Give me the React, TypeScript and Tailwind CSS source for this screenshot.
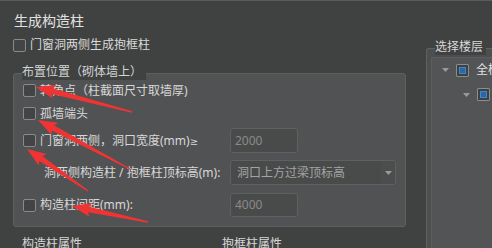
import React from "react";

const FONT = "font-['Noto_Sans','Noto_Sans_CJK_SC',sans-serif]";

const Check = () => (
  <div className="w-[13px] h-[13px] shrink-0 rounded-[2px] border border-[#8a8a8a] bg-[#434445]" />
);

const BlueCheck = () => (
  <div className="w-[13px] h-[13px] shrink-0 rounded-[1px] border border-[#8c8c8c] bg-[#3f4041] p-[2px]">
    <div className="w-full h-full bg-[#2b67a3] border border-[#3f87c8]" />
  </div>
);

const Caret = () => (
  <svg width="7" height="4" viewBox="0 0 7 4" className="shrink-0">
    <path d="M0 0 L7 0 L3.5 4 Z" fill="#9a9a9a" />
  </svg>
);

const Field = ({ value, w }: { value: string; w: string }) => (
  <div
    className={`${w} h-full flex items-center pl-[4px] rounded-[3px] border border-[#5f6060] bg-[#494a4a] text-[#8a8a8a] text-[12px]`}
  >
    {value}
  </div>
);

// tip / tail pairs of the red annotation arrows
const arrows: [number, number, number, number][] = [
  [36, 86, 132, 111],
  [38, 119, 130, 168],
  [27, 148, 88, 190],
  [72, 205, 148, 221],
];

const arrowPoints = (tx: number, ty: number, sx: number, sy: number) => {
  const dx = tx - sx;
  const dy = ty - sy;
  const len = Math.hypot(dx, dy);
  const ux = dx / len;
  const uy = dy / len;
  const nx = -uy;
  const ny = ux;
  const head = 17;
  const bx = tx - ux * head;
  const by = ty - uy * head;
  const p = (x: number, y: number) => `${x.toFixed(1)},${y.toFixed(1)}`;
  return [
    p(sx + nx * 0.7, sy + ny * 0.7),
    p(bx + nx * 2.8, by + ny * 2.8),
    p(bx - ux * 2 + nx * 7, by - uy * 2 + ny * 7),
    p(tx, ty),
    p(bx - ux * 2 - nx * 7, by - uy * 2 - ny * 7),
    p(bx - nx * 2.8, by - ny * 2.8),
    p(sx - nx * 0.7, sy - ny * 0.7),
  ].join(" ");
};

export default function App() {
  return (
    <div
      className={`relative w-[492px] h-[248px] overflow-hidden flex bg-[#404241] border-t border-[#5a5b5b] ${FONT}`}
    >
      {/* left column */}
      <div className="w-[426px] shrink-0 pl-[13px] pt-[9px] flex flex-col">
        <div className="h-[20px] pl-[1px] flex items-center text-[14px] text-[#e2e2e2]">
          生成构造柱
        </div>
        <div className="mt-[6px] h-[20px] flex items-center gap-[4px] text-[12px] text-[#dadada]">
          <Check />
          <span>门窗洞两侧生成抱框柱</span>
        </div>

        <div className="relative mt-[19px] w-[393px] h-[154px] shrink-0 rounded-[3px] border border-[#5e5f5f] bg-[#515253] pl-[9px] pt-[5px] text-[12px] text-[#d8d8d8]">
          <div className="absolute left-[8px] top-[-10px] h-[16px] pr-[4px] leading-[16px] bg-[#404241] text-[12px] text-[#d4d4d4]">
            布置位置（砌体墙上）
          </div>

          <div className="h-[23px] flex items-center gap-[4px]">
            <Check />
            <span>转角点（柱截面尺寸取墙厚)</span>
          </div>
          <div className="h-[23px] flex items-center gap-[4px]">
            <Check />
            <span>孤墙端头</span>
          </div>
          <div className="mt-[3px] h-[25px] flex items-center">
            <div className="w-[207px] flex items-center gap-[4px]">
              <Check />
              <span>
                门窗洞两侧，洞口宽度(mm)
                <span className="font-['DejaVu_Sans',sans-serif] text-[10px]">≥</span>
              </span>
            </div>
            <Field value="2000" w="w-[68px]" />
          </div>
          <div className="mt-[7px] h-[25px] flex items-center">
            <div className="w-[207px] pl-[21px]">洞两侧构造柱 / 抱框柱顶标高(m):</div>
            <div className="w-[166px] h-full flex items-center rounded-[3px] border border-[#5f6060] bg-[#494a4a] text-[12px] text-[#a4a4a4]">
              <span className="flex-1 pl-[6px]">洞口上方过梁顶标高</span>
              <div className="w-[14px] h-full flex items-center justify-center bg-[#4c4d4d]">
                <Caret />
              </div>
            </div>
          </div>
          <div className="mt-[8px] h-[24px] flex items-center">
            <div className="w-[207px] flex items-center gap-[4px]">
              <Check />
              <span>构造柱间距(mm):</span>
            </div>
            <Field value="4000" w="w-[68px]" />
          </div>
        </div>

        <div className="mt-[9px] pl-[9px] flex text-[12px] leading-[16px] text-[#d8d8d8]">
          <span className="w-[200px]">构造柱属性</span>
          <span>抱框柱属性</span>
        </div>
      </div>

      {/* right column */}
      <div className="flex-1 pt-[47px]">
        <div className="relative h-[220px] border-l border-t border-[#606161] rounded-tl-[3px] bg-[#4d4e4f] pl-[4px] pt-[8px]">
          <div className="absolute left-[8px] top-[-10px] h-[16px] pr-[3px] leading-[16px] bg-[#404241] text-[12px] text-[#d8d8d8]">
            选择楼层
          </div>
          <div className="h-full border-l border-t border-[#5c5d5d] bg-[#535455] text-[12px] text-[#e0e0e0] whitespace-nowrap">
            <div className="h-[24px] pl-[10px] flex items-center">
              <Caret />
              <div className="ml-[7px]">
                <BlueCheck />
              </div>
              <span className="ml-[7px]">全楼</span>
            </div>
            <div className="h-[25px] pl-[31px] flex items-center">
              <Caret />
              <div className="ml-[7px]">
                <BlueCheck />
              </div>
              <span className="ml-[7px]">第1层</span>
            </div>
          </div>
        </div>
      </div>

      {/* red annotation arrows */}
      <svg
        className="absolute inset-0 pointer-events-none"
        width="492"
        height="248"
        viewBox="0 0 492 248"
      >
        {arrows.map(([tx, ty, sx, sy], i) => (
          <polygon key={i} points={arrowPoints(tx, ty, sx, sy)} fill="#f03434" />
        ))}
      </svg>
    </div>
  );
}
